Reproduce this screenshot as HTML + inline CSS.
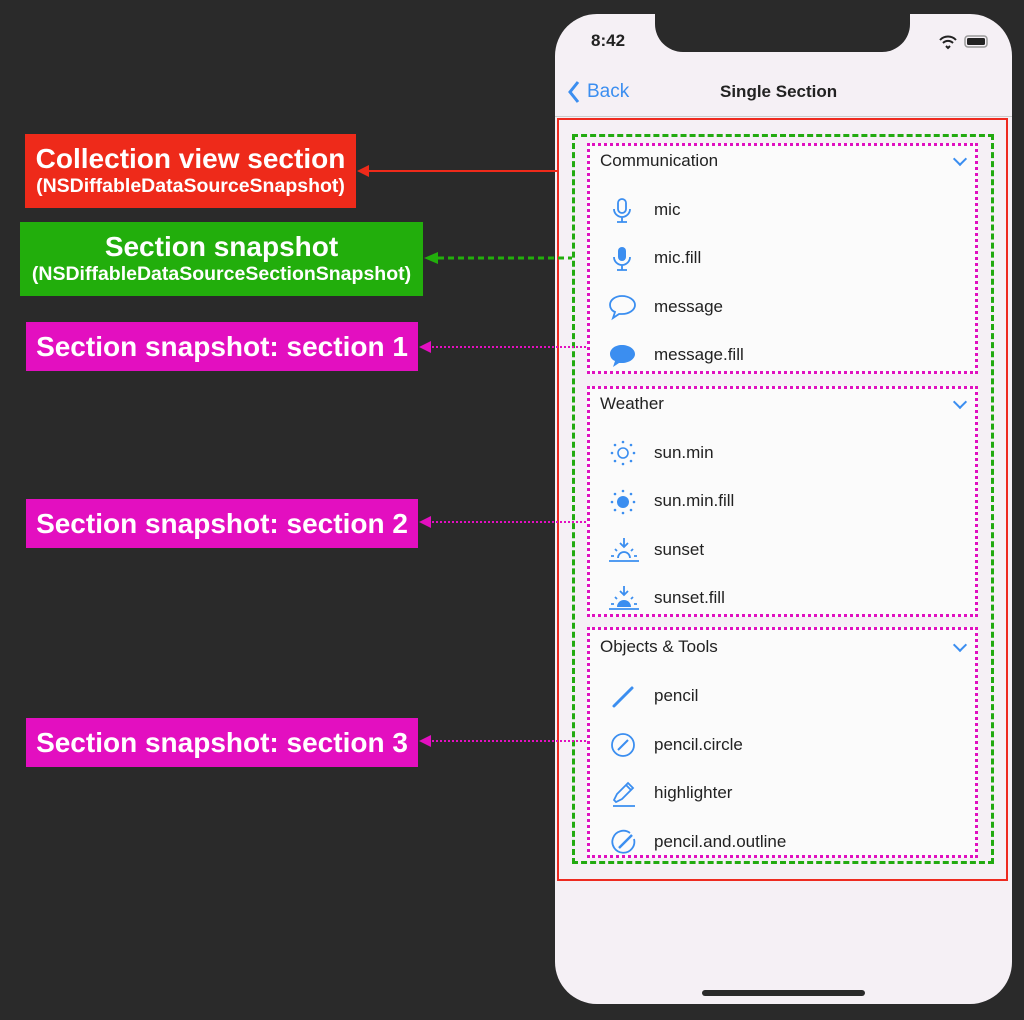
<!DOCTYPE html>
<html><head><meta charset="utf-8"><style>
*{margin:0;padding:0;box-sizing:border-box}
body{width:1024px;height:1020px;background:#2a2a2a;position:relative;overflow:hidden;font-family:"Liberation Sans",sans-serif}
.abs{position:absolute}
.phone{left:555px;top:14px;width:457px;height:990px;background:#f5f0f5;border-radius:42px}
.notch{left:655px;top:0;width:255px;height:52px;background:#2a2a2a;border-radius:0 0 28px 28px}
.lbl{position:absolute;color:#fff;font-weight:bold;text-align:center;white-space:nowrap}
.big{font-size:28px;line-height:30px}
.small{font-size:19.5px;line-height:24px}
.sec{position:absolute;left:587px;width:391px;border:3px dotted #e010c0;background:#fbfbfb}
.hdr{position:absolute;left:10px;font-size:17px;color:#222}
.chev{position:absolute;right:10px;width:10px;height:10px;border-right:2px solid #3b8ef0;border-bottom:2px solid #3b8ef0;transform:rotate(45deg)}
.row{position:absolute;left:64px;font-size:17px;color:#222}
.ic{position:absolute;left:20px}
</style></head><body>
<div class="abs phone"></div>
<div class="abs notch"></div>
<div class="abs" style="left:591px;top:31px;font-size:17px;font-weight:bold;color:#222">8:42</div>
<svg class="abs" style="left:938px;top:34px" width="54" height="16"><path d="M2 6a11 11 0 0 1 16 0M5 9a7 7 0 0 1 10 0M8 12l2 2 2-2" stroke="#222" stroke-width="2" fill="none"/><rect x="27" y="2" width="22" height="11" rx="3" fill="none" stroke="#999" stroke-width="1.5"/><rect x="29" y="4" width="18" height="7" rx="1.5" fill="#222"/></svg>
<svg class="abs" style="left:567px;top:80px" width="14" height="24"><path d="M11 2L3 12l8 10" stroke="#3b8ef0" stroke-width="3" fill="none"/></svg>
<div class="abs" style="left:587px;top:81px;font-size:19px;color:#3b8ef0">Back</div>
<div class="abs" style="left:720px;top:82px;font-size:17px;font-weight:bold;color:#222">Single Section</div>
<div class="abs" style="left:555px;top:116px;width:457px;height:1px;background:#ccc"></div>
<div class="abs" style="left:557px;top:118px;width:451px;height:763px;border:2px solid #ee2a20"></div>
<div class="abs" style="left:572px;top:134px;width:422px;height:730px;border:3px dashed #22aa10"></div>

<div class="sec" style="top:143px;height:231px">
<div class="hdr" style="top:5px">Communication</div><div class="chev" style="top:8px"></div>
<svg class="ic" style="top:52px" width="24" height="26"><rect x="8" y="1" width="8" height="14" rx="4" fill="none" stroke="#3b8ef0" stroke-width="1.8"/><path d="M4 11a8 8 0 0 0 16 0M12 19v5M7 24h10" stroke="#3b8ef0" stroke-width="1.8" fill="none"/></svg>
<div class="row" style="top:54px">mic</div>
<svg class="ic" style="top:100px" width="24" height="26"><rect x="8" y="1" width="8" height="14" rx="4" fill="#3b8ef0"/><path d="M4 11a8 8 0 0 0 16 0M12 19v5M7 24h10" stroke="#3b8ef0" stroke-width="1.8" fill="none"/></svg>
<div class="row" style="top:102px">mic.fill</div>
<svg class="ic" style="top:148px;left:18px" width="30" height="28"><path d="M14 2C7 2 2 6 2 11c0 3 2 6 5 7l-2 6 6-4c1 0 2 0 3 0 7 0 13-4 13-9S21 2 14 2z" fill="none" stroke="#3b8ef0" stroke-width="1.8"/></svg>
<div class="row" style="top:151px">message</div>
<svg class="ic" style="top:197px;left:18px" width="30" height="28"><path d="M14 2C7 2 2 6 2 11c0 3 2 6 5 7l-2 6 6-4c1 0 2 0 3 0 7 0 13-4 13-9S21 2 14 2z" fill="#3b8ef0"/></svg>
<div class="row" style="top:199px">message.fill</div>
</div>

<div class="sec" style="top:386px;height:231px">
<div class="hdr" style="top:5px">Weather</div><div class="chev" style="top:8px"></div>
<svg class="ic" style="top:51px" width="26" height="26"><circle cx="13" cy="13" r="5" fill="none" stroke="#3b8ef0" stroke-width="1.6"/><g fill="#3b8ef0"><circle cx="13" cy="2" r="1.3"/><circle cx="13" cy="24" r="1.3"/><circle cx="2" cy="13" r="1.3"/><circle cx="24" cy="13" r="1.3"/><circle cx="5" cy="5" r="1.3"/><circle cx="21" cy="5" r="1.3"/><circle cx="5" cy="21" r="1.3"/><circle cx="21" cy="21" r="1.3"/></g></svg>
<div class="row" style="top:54px">sun.min</div>
<svg class="ic" style="top:100px" width="26" height="26"><circle cx="13" cy="13" r="6" fill="#3b8ef0"/><g fill="#3b8ef0"><circle cx="13" cy="2" r="1.3"/><circle cx="13" cy="24" r="1.3"/><circle cx="2" cy="13" r="1.3"/><circle cx="24" cy="13" r="1.3"/><circle cx="5" cy="5" r="1.3"/><circle cx="21" cy="5" r="1.3"/><circle cx="5" cy="21" r="1.3"/><circle cx="21" cy="21" r="1.3"/></g></svg>
<div class="row" style="top:102px">sun.min.fill</div>
<svg class="ic" style="top:148px;left:18px" width="32" height="26"><path d="M16 1v8M12 6l4 4 4-4M1 24h30M10 21a6 6 0 0 1 12 0M3 19h3M26 19h3M7 12l2 2M25 12l-2 2" stroke="#3b8ef0" stroke-width="1.8" fill="none"/></svg>
<div class="row" style="top:151px">sunset</div>
<svg class="ic" style="top:196px;left:18px" width="32" height="26"><path d="M16 1v8M12 6l4 4 4-4M1 24h30M3 19h3M26 19h3M7 12l2 2M25 12l-2 2" stroke="#3b8ef0" stroke-width="1.8" fill="none"/><path d="M9 22a7 7 0 0 1 14 0z" fill="#3b8ef0"/></svg>
<div class="row" style="top:199px">sunset.fill</div>
</div>

<div class="sec" style="top:627px;height:231px">
<div class="hdr" style="top:7px">Objects &amp; Tools</div><div class="chev" style="top:10px"></div>
<svg class="ic" style="top:54px" width="26" height="26"><path d="M4 22L22 4" stroke="#3b8ef0" stroke-width="3" stroke-linecap="round"/></svg>
<div class="row" style="top:56px">pencil</div>
<svg class="ic" style="top:102px" width="26" height="26"><circle cx="13" cy="13" r="11" fill="none" stroke="#3b8ef0" stroke-width="1.8"/><path d="M8 18L18 8" stroke="#3b8ef0" stroke-width="2"/></svg>
<div class="row" style="top:105px">pencil.circle</div>
<svg class="ic" style="top:150px" width="28" height="28"><path d="M4 20l3-6L18 3l5 5-11 11-6 3zM16 5l5 5M3 26h22" stroke="#3b8ef0" stroke-width="1.8" fill="none"/></svg>
<div class="row" style="top:153px">highlighter</div>
<svg class="ic" style="top:199px" width="28" height="28"><path d="M20 4A11 11 0 1 0 24 10" fill="none" stroke="#3b8ef0" stroke-width="1.8"/><path d="M9 19L22 6" stroke="#3b8ef0" stroke-width="2.5"/></svg>
<div class="row" style="top:202px">pencil.and.outline</div>
</div>

<div class="abs" style="left:702px;top:990px;width:163px;height:6px;border-radius:3px;background:#2a2a2a"></div>

<div class="lbl" style="left:25px;top:134px;width:331px;height:74px;background:#ee2a1a"><div class="big" style="margin-top:10px">Collection view section</div><div class="small">(NSDiffableDataSourceSnapshot)</div></div>
<div class="lbl" style="left:20px;top:222px;width:403px;height:74px;background:#22ae0c"><div class="big" style="margin-top:10px">Section snapshot</div><div class="small">(NSDiffableDataSourceSectionSnapshot)</div></div>
<div class="lbl big" style="left:26px;top:322px;width:392px;height:49px;background:#e30fc0;padding-top:10px">Section snapshot: section 1</div>
<div class="lbl big" style="left:26px;top:499px;width:392px;height:49px;background:#e30fc0;padding-top:10px">Section snapshot: section 2</div>
<div class="lbl big" style="left:26px;top:718px;width:392px;height:49px;background:#e30fc0;padding-top:10px">Section snapshot: section 3</div>

<svg class="abs" style="left:0;top:0" width="1024" height="1020">
<path d="M368 171H558" stroke="#ee2a1a" stroke-width="2"/><path d="M357 171l12-6v12z" fill="#ee2a1a"/>
<path d="M438 258H572" stroke="#22ae0c" stroke-width="3" stroke-dasharray="6 4"/><path d="M424 258l14-6v12z" fill="#22ae0c"/>
<path d="M432 347H587" stroke="#e30fc0" stroke-width="2" stroke-dasharray="2 2"/><path d="M419 347l12-6v12z" fill="#e30fc0"/>
<path d="M432 522H587" stroke="#e30fc0" stroke-width="2" stroke-dasharray="2 2"/><path d="M419 522l12-6v12z" fill="#e30fc0"/>
<path d="M432 741H587" stroke="#e30fc0" stroke-width="2" stroke-dasharray="2 2"/><path d="M419 741l12-6v12z" fill="#e30fc0"/>
</svg>
</body></html>
